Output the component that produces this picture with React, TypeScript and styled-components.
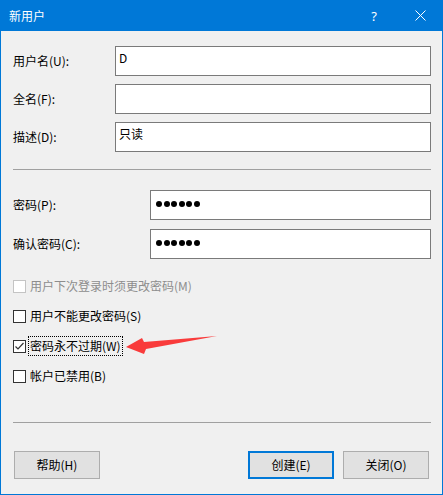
import React from "react";
import styled, { createGlobalStyle } from "styled-components";

const GlobalStyle = createGlobalStyle`
  html, body {
    margin: 0;
    padding: 0;
    background: #f0f0f0;
  }
  body {
    font-family: "Microsoft YaHei", "Noto Sans CJK SC", "Noto Sans", sans-serif;
    font-size: 12px;
    color: #000;
  }
`;

const Window = styled.div`
  position: relative;
  width: 443px;
  height: 495px;
  box-sizing: border-box;
  border: 1px solid #0078d7;
  border-top: none;
  background: #f0f0f0;
  display: flex;
  flex-direction: column;
`;

const TitleBar = styled.div`
  height: 31px;
  margin: 0 -1px;
  background: #0078d7;
  color: #fff;
  display: flex;
  align-items: center;
  padding-left: 9px;
  flex-shrink: 0;
`;

const Title = styled.span`
  flex: 1;
  font-size: 12px;
  line-height: 14px;
`;

const TitleButton = styled.span`
  width: 46px;
  height: 31px;
  display: flex;
  align-items: center;
  justify-content: center;
  font-family: "Segoe UI", "Noto Sans", sans-serif;
  font-size: 13px;
`;

const Body = styled.div`
  flex: 1;
  display: flex;
  flex-direction: column;
  padding: 15px 11px 15px 12px;
`;

const FieldGrid = styled.div<{ $labelWidth: number; $gap: number }>`
  display: grid;
  grid-template-columns: ${(p) => p.$labelWidth}px 1fr;
  grid-auto-rows: 30px;
  row-gap: ${(p) => p.$gap}px;
  align-items: center;
`;

const Label = styled.span`
  line-height: 16px;
  white-space: nowrap;
`;

const TextBox = styled.div`
  height: 30px;
  box-sizing: border-box;
  border: 1px solid #7a7a7a;
  background: #fff;
  padding: 3px 3px;
  line-height: 16px;
`;

const Dots = styled.div`
  display: flex;
  gap: 1.6px;
  padding: 7px 0 0 2px;
`;

const Dot = styled.span`
  width: 6px;
  height: 6px;
  border-radius: 50%;
  background: #000;
`;

const Separator = styled.div<{ $top: number }>`
  height: 1px;
  background: #a0a0a0;
  margin-top: ${(p) => p.$top}px;
`;

const CheckList = styled.div`
  margin-top: 12px;
  display: flex;
  flex-direction: column;
`;

const CheckRow = styled.div<{ $disabled?: boolean }>`
  height: 30px;
  display: flex;
  align-items: center;
  color: ${(p) => (p.$disabled ? "#8d8d8d" : "#000")};
`;

const Box = styled.span<{ $disabled?: boolean }>`
  width: 13px;
  height: 13px;
  box-sizing: border-box;
  border: 1px solid ${(p) => (p.$disabled ? "#c4c4c4" : "#333")};
  background: #fff;
  display: flex;
  align-items: center;
  justify-content: center;
  margin-right: 2px;
`;

const CheckText = styled.span<{ $focused?: boolean }>`
  line-height: 16px;
  padding: 1px 1px;
  border: 1px dotted ${(p) => (p.$focused ? "#000" : "transparent")};
`;

const Footer = styled.div`
  margin-top: auto;
  display: flex;
  flex-direction: column;
`;

const ButtonRow = styled.div`
  margin-top: 28px;
  display: flex;
  align-items: center;
  gap: 9px;
  padding: 0 2px 0 1px;
`;

const Spacer = styled.div`
  flex: 1;
`;

const Button = styled.div<{ $default?: boolean }>`
  width: 86px;
  height: 28px;
  box-sizing: border-box;
  border: ${(p) => (p.$default ? "2px solid #0078d7" : "1px solid #adadad")};
  background: #e1e1e1;
  display: flex;
  align-items: center;
  justify-content: center;
  line-height: 16px;
`;

const Arrow = styled.svg`
  position: absolute;
  left: 120px;
  top: 330px;
`;

const CheckMark = () => (
  <svg width="11" height="11" viewBox="0 0 11 11">
    <path d="M1.5 5.5 L4 8 L9.5 2" fill="none" stroke="#333" strokeWidth="1.2" />
  </svg>
);

const Check: React.FC<{
  label: string;
  checked?: boolean;
  disabled?: boolean;
  focused?: boolean;
}> = ({ label, checked, disabled, focused }) => (
  <CheckRow $disabled={disabled}>
    <Box $disabled={disabled}>{checked && <CheckMark />}</Box>
    <CheckText $focused={focused}>{label}</CheckText>
  </CheckRow>
);

const Password = () => (
  <TextBox>
    <Dots>
      {Array.from({ length: 6 }).map((_, i) => (
        <Dot key={i} />
      ))}
    </Dots>
  </TextBox>
);

export default function App() {
  return (
    <>
      <GlobalStyle />
      <Window>
        <TitleBar>
          <Title>新用户</Title>
          <TitleButton>?</TitleButton>
          <TitleButton>
            <svg width="11" height="11" viewBox="0 0 11 11">
              <path d="M0.5 0.5 L10.5 10.5 M10.5 0.5 L0.5 10.5" stroke="#fff" strokeWidth="1" />
            </svg>
          </TitleButton>
        </TitleBar>
        <Body>
          <FieldGrid $labelWidth={102} $gap={8}>
            <Label>用户名(U):</Label>
            <TextBox>D</TextBox>
            <Label>全名(F):</Label>
            <TextBox />
            <Label>描述(D):</Label>
            <TextBox>只读</TextBox>
          </FieldGrid>
          <Separator $top={17} />
          <FieldGrid $labelWidth={137} $gap={9} style={{ marginTop: 20 }}>
            <Label>密码(P):</Label>
            <Password />
            <Label>确认密码(C):</Label>
            <Password />
          </FieldGrid>
          <CheckList>
            <Check label="用户下次登录时须更改密码(M)" disabled />
            <Check label="用户不能更改密码(S)" />
            <Check label="密码永不过期(W)" checked focused />
            <Check label="帐户已禁用(B)" />
          </CheckList>
          <Footer>
            <Separator $top={0} />
            <ButtonRow>
              <Button>帮助(H)</Button>
              <Spacer />
              <Button $default>创建(E)</Button>
              <Button>关闭(O)</Button>
            </ButtonRow>
          </Footer>
        </Body>
        <Arrow width="100" height="28" viewBox="0 0 100 28">
          <polygon points="5,17 21,8 23,12 96,6 25,19 23,24" fill="#f93b3b" />
        </Arrow>
      </Window>
    </>
  );
}
